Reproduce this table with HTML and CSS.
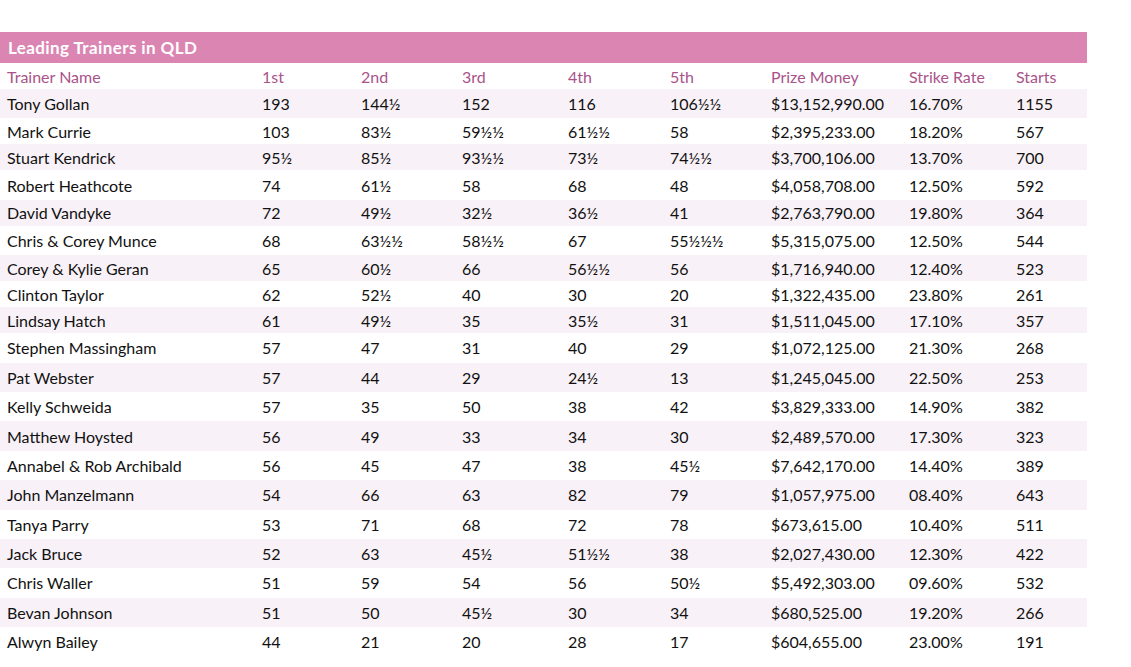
FILE: index.html
```html
<!DOCTYPE html>
<html lang="en">
<head>
<meta charset="utf-8">
<title>Leading Trainers in QLD</title>
<link rel="stylesheet" href="styles.css">
</head>
<body>
<div class="board">
  <div class="title">Leading Trainers in QLD</div>
  <div class="row head short">
    <div>Trainer Name</div><div>1st</div><div>2nd</div><div>3rd</div><div>4th</div><div>5th</div><div>Prize Money</div><div>Strike Rate</div><div>Starts</div>
  </div>
  <div class="row alt tall"><div>Tony Gollan</div><div>193</div><div>144½</div><div>152</div><div>116</div><div>106½½</div><div>$13,152,990.00</div><div>16.70%</div><div>1155</div></div>
  <div class="row short"><div>Mark Currie</div><div>103</div><div>83½</div><div>59½½</div><div>61½½</div><div>58</div><div>$2,395,233.00</div><div>18.20%</div><div>567</div></div>
  <div class="row alt short"><div>Stuart Kendrick</div><div>95½</div><div>85½</div><div>93½½</div><div>73½</div><div>74½½</div><div>$3,700,106.00</div><div>13.70%</div><div>700</div></div>
  <div class="row tall"><div>Robert Heathcote</div><div>74</div><div>61½</div><div>58</div><div>68</div><div>48</div><div>$4,058,708.00</div><div>12.50%</div><div>592</div></div>
  <div class="row alt short"><div>David Vandyke</div><div>72</div><div>49½</div><div>32½</div><div>36½</div><div>41</div><div>$2,763,790.00</div><div>19.80%</div><div>364</div></div>
  <div class="row tall"><div>Chris &amp; Corey Munce</div><div>68</div><div>63½½</div><div>58½½</div><div>67</div><div>55½½½</div><div>$5,315,075.00</div><div>12.50%</div><div>544</div></div>
  <div class="row alt short"><div>Corey &amp; Kylie Geran</div><div>65</div><div>60½</div><div>66</div><div>56½½</div><div>56</div><div>$1,716,940.00</div><div>12.40%</div><div>523</div></div>
  <div class="row short"><div>Clinton Taylor</div><div>62</div><div>52½</div><div>40</div><div>30</div><div>20</div><div>$1,322,435.00</div><div>23.80%</div><div>261</div></div>
  <div class="row alt short"><div>Lindsay Hatch</div><div>61</div><div>49½</div><div>35</div><div>35½</div><div>31</div><div>$1,511,045.00</div><div>17.10%</div><div>357</div></div>
  <div class="row tall"><div>Stephen Massingham</div><div>57</div><div>47</div><div>31</div><div>40</div><div>29</div><div>$1,072,125.00</div><div>21.30%</div><div>268</div></div>
  <div class="row alt tall"><div>Pat Webster</div><div>57</div><div>44</div><div>29</div><div>24½</div><div>13</div><div>$1,245,045.00</div><div>22.50%</div><div>253</div></div>
  <div class="row tall"><div>Kelly Schweida</div><div>57</div><div>35</div><div>50</div><div>38</div><div>42</div><div>$3,829,333.00</div><div>14.90%</div><div>382</div></div>
  <div class="row alt tall"><div>Matthew Hoysted</div><div>56</div><div>49</div><div>33</div><div>34</div><div>30</div><div>$2,489,570.00</div><div>17.30%</div><div>323</div></div>
  <div class="row tall"><div>Annabel &amp; Rob Archibald</div><div>56</div><div>45</div><div>47</div><div>38</div><div>45½</div><div>$7,642,170.00</div><div>14.40%</div><div>389</div></div>
  <div class="row alt tall"><div>John Manzelmann</div><div>54</div><div>66</div><div>63</div><div>82</div><div>79</div><div>$1,057,975.00</div><div>08.40%</div><div>643</div></div>
  <div class="row tall"><div>Tanya Parry</div><div>53</div><div>71</div><div>68</div><div>72</div><div>78</div><div>$673,615.00</div><div>10.40%</div><div>511</div></div>
  <div class="row alt tall"><div>Jack Bruce</div><div>52</div><div>63</div><div>45½</div><div>51½½</div><div>38</div><div>$2,027,430.00</div><div>12.30%</div><div>422</div></div>
  <div class="row tall"><div>Chris Waller</div><div>51</div><div>59</div><div>54</div><div>56</div><div>50½</div><div>$5,492,303.00</div><div>09.60%</div><div>532</div></div>
  <div class="row alt tall"><div>Bevan Johnson</div><div>51</div><div>50</div><div>45½</div><div>30</div><div>34</div><div>$680,525.00</div><div>19.20%</div><div>266</div></div>
  <div class="row tall"><div>Alwyn Bailey</div><div>44</div><div>21</div><div>20</div><div>28</div><div>17</div><div>$604,655.00</div><div>23.00%</div><div>191</div></div>
</div>
</body>
</html>
```
FILE: styles.css
```css
html, body {
  margin: 0;
  padding: 0;
  background: #ffffff;
}
body {
  font-family: "Lato", "Liberation Sans", sans-serif;
  color: #111111;
  font-size: 16px;
}
.board {
  width: 1087px;
  padding-top: 32px;
}
.title {
  background: #db85b3;
  color: #ffffff;
  font-weight: 700;
  font-size: 17px;
  letter-spacing: 0.4px;
  height: 31px;
  line-height: 31px;
  padding-left: 8px;
  box-sizing: border-box;
}
.row {
  display: grid;
  grid-template-columns: 255px 99px 101px 106px 102px 101px 138px 107px 78px;
  align-items: center;
  white-space: nowrap;
}
.row > div {
  padding-left: 7px;
}
.short { height: 26px; }
.tall { height: 29.4px; }
.alt { background: #f9f1f8; }
.head {
  color: #a9538a;
}
```
